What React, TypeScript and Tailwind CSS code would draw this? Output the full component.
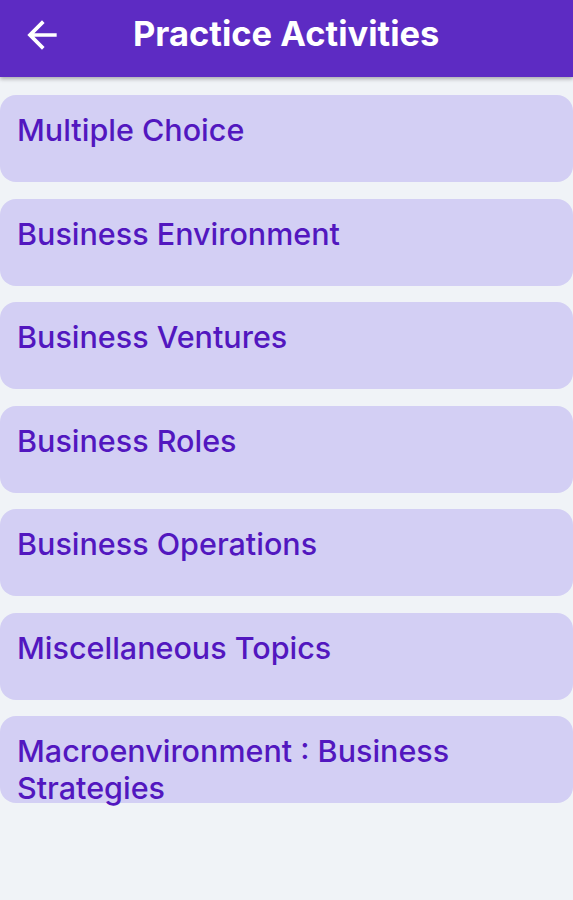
import React from 'react';

const topics = [
  'Multiple Choice',
  'Business Environment',
  'Business Ventures',
  'Business Roles',
  'Business Operations',
  'Miscellaneous Topics',
  'Macroenvironment : Business Strategies',
];

export default function App() {
  return (
    <div className="w-[573px] h-[900px] bg-[#f0f3f7] font-['Inter',sans-serif] overflow-hidden">
      <header className="h-[77px] bg-[#5d2bc3] flex items-center pb-[8px] shadow-[0_2px_4px_rgba(0,0,0,0.3)] relative">
        <button className="w-[83px] h-full flex items-center justify-center text-white">
          <svg width="44" height="44" viewBox="0 0 24 24" fill="currentColor">
            <path d="M20 11H7.83l5.59-5.59L12 4l-8 8 8 8 1.41-1.41L7.83 13H20v-2z" />
          </svg>
        </button>
        <h1 className="ml-[50px] text-white text-[34.5px] font-bold leading-none">Practice Activities</h1>
      </header>

      <div className="pt-[18px] flex flex-col gap-[16.5px]">
        {topics.map(t => (
          <div key={t} className="h-[87px] bg-[#d3cff4] rounded-[16px] px-[17px] pt-[16px]">
            <p className="text-[#5217bf] text-[30.5px] font-medium leading-[37px]">{t}</p>
          </div>
        ))}
      </div>
    </div>
  );
}
